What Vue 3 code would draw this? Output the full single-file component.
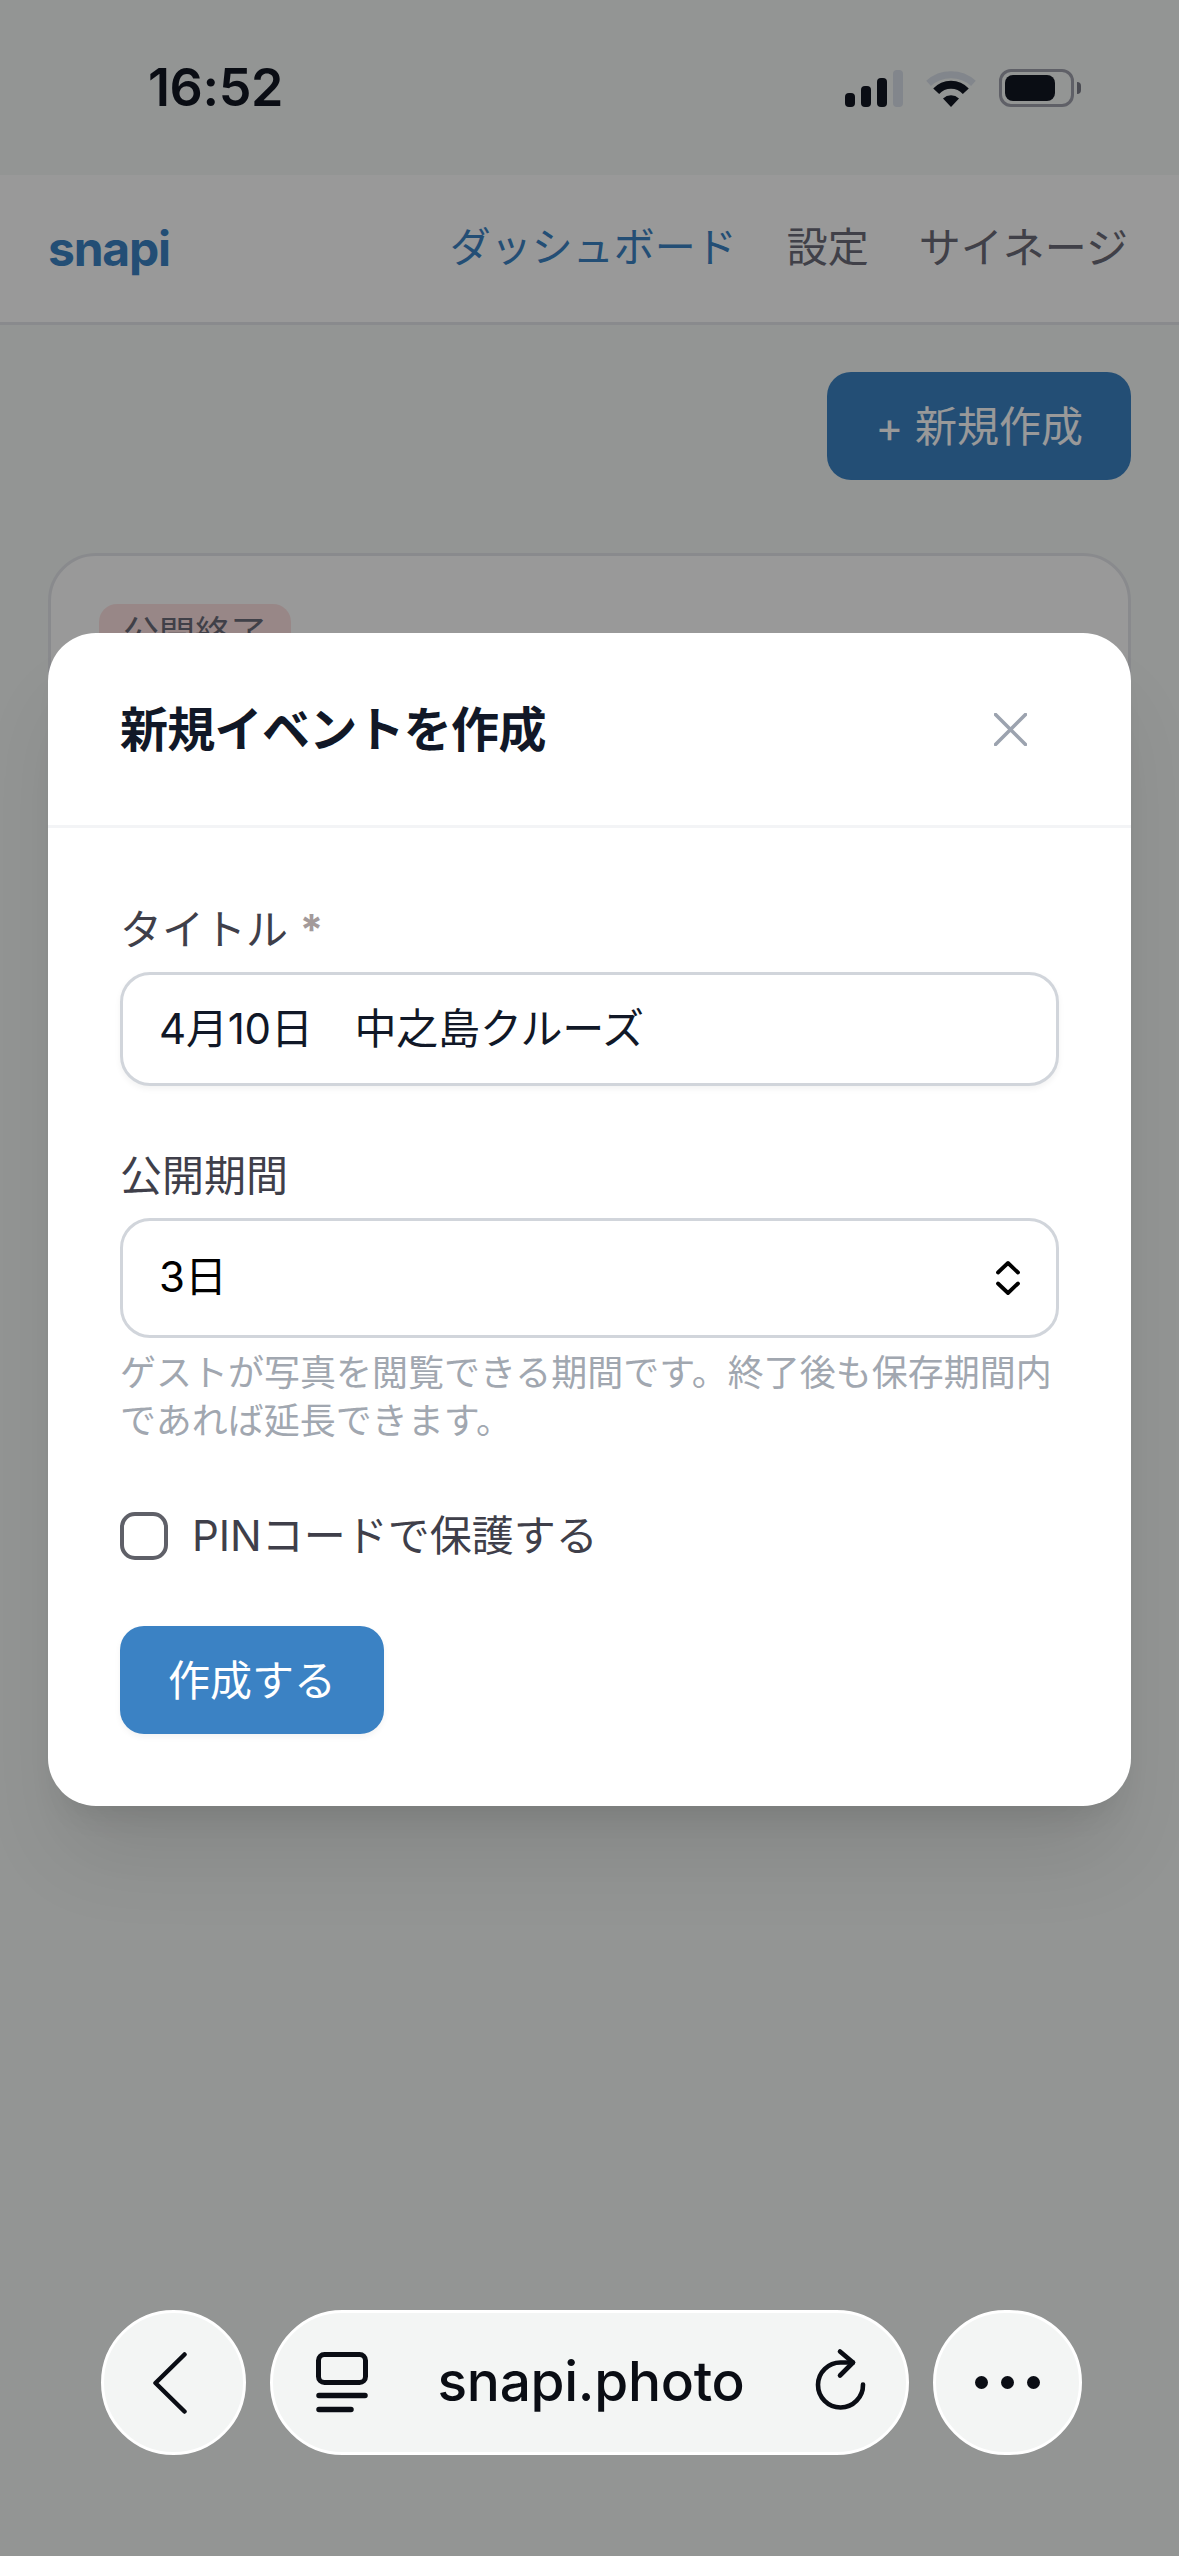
<script setup>
import { ref } from 'vue';

// フォームの初期値
const title = ref('4月10日　中之島クルーズ');
const period = ref('3日');
const usePin = ref(false);
</script>

<template>
  <div class="screen">
    <div class="page">
      <header class="topbar">
        <span class="logo">snapi</span>
        <nav class="nav">
          <a class="active">ダッシュボード</a>
          <a>設定</a>
          <a class="wide">サイネージ</a>
        </nav>
      </header>
      <main class="main">
        <div class="toolbar">
          <button class="btn-new">+ 新規作成</button>
        </div>
        <section class="card">
          <span class="badge">公開終了</span>
        </section>
      </main>
    </div>

    <!-- モーダル -->
    <div class="overlay">
      <div class="modal">
        <div class="modal-head">
          <h2>新規イベントを作成</h2>
          <svg class="close" width="33" height="33" viewBox="0 0 33 33" fill="none" stroke="#9ca3af" stroke-width="3.6" stroke-linecap="round">
            <path d="M1.5 1.5 31.5 31.5M31.5 1.5 1.5 31.5" />
          </svg>
        </div>
        <form class="modal-body" @submit.prevent>
          <div class="field">
            <label>タイトル <span class="req">*</span></label>
            <input v-model="title" class="text-input" type="text" />
          </div>
          <div class="field">
            <label>公開期間</label>
            <div class="select-wrap">
              <select v-model="period" class="select">
                <option>3日</option>
                <option>7日</option>
                <option>30日</option>
              </select>
              <svg class="updown" width="26" height="34" viewBox="0 0 26 34" fill="none" stroke="#000" stroke-width="3.8" stroke-linecap="round" stroke-linejoin="round">
                <path d="M3 11.5 13 2 23 11.5M3 22.5 13 32 23 22.5" />
              </svg>
            </div>
            <p class="help">ゲストが写真を閲覧できる期間です。終了後も保存期間内であれば延長できます。</p>
          </div>
          <label class="check-row">
            <input v-model="usePin" class="check" type="checkbox" />
            <span>PINコードで保護する</span>
          </label>
          <div class="actions">
            <button class="btn-primary">作成する</button>
          </div>
        </form>
      </div>
    </div>

    <!-- ステータスバー -->
    <div class="status">
      <span class="time">16:52</span>
      <div class="status-icons">
        <svg width="58" height="37" viewBox="0 0 58 37">
          <rect x="0" y="23" width="10" height="14" rx="4" fill="#0a0d14" />
          <rect x="16" y="16" width="10" height="21" rx="4" fill="#0a0d14" />
          <rect x="32" y="8" width="10" height="29" rx="4" fill="#0a0d14" />
          <rect x="48" y="0" width="10" height="37" rx="4" fill="#82868c" />
        </svg>
        <svg class="wifi" width="52" height="37" viewBox="0 0 52 37" fill="none">
          <path d="M3.6 13.4A33.5 33.5 0 0 1 48.4 13.4" stroke="#82868c" stroke-width="7" />
          <path d="M11.2 21.2A20 20 0 0 1 40.8 21.2" stroke="#0a0d14" stroke-width="8" />
          <path d="M26 37 18 28.4A12 12 0 0 1 34 28.4Z" fill="#0a0d14" />
        </svg>
        <div class="battery"><i></i></div>
        <span class="nub"></span>
      </div>
    </div>

    <!-- Safari のツールバー -->
    <div class="safari">
      <div class="pill round back">
        <svg width="34" height="62" viewBox="0 0 34 62" fill="none" stroke="#0a0d14" stroke-width="4.5" stroke-linecap="round" stroke-linejoin="round">
          <path d="M31.5 2.500 2.500 31 31.500 59.500" />
        </svg>
      </div>
      <div class="pill address">
        <svg width="52" height="62" viewBox="0 0 52 62" fill="none" stroke="#0a0d14" stroke-linecap="round">
          <rect x="2.500" y="2.500" width="47" height="28" rx="6" stroke-width="5" />
          <path d="M3 43.500H49M3 57.500H35" stroke-width="5.500" />
        </svg>
        <span class="url">snapi.photo</span>
        <svg width="52" height="70" viewBox="0 0 52 70" fill="none" stroke="#0a0d14" stroke-width="4.600" stroke-linecap="round" stroke-linejoin="round">
          <path d="M39 14.500H27A22.500 22.500 0 1 0 49 36.500" />
          <path d="M26 3.500 39 14.500 26 27.500" />
        </svg>
      </div>
      <div class="pill round more">
        <i></i><i></i><i></i>
      </div>
    </div>
  </div>
</template>

<style scoped>
.screen {
  position: relative;
  width: 1179px;
  height: 2556px;
  overflow: hidden;
  background: #f5f9f7;
  font-family: Inter, "Noto Sans CJK JP", sans-serif;
  color: #111827;
}

.page {
  padding-top: 175px;
}

.topbar {
  display: flex;
  align-items: center;
  justify-content: space-between;
  height: 150px;
  padding: 0 51px 0 48px;
  box-sizing: border-box;
  background: #fff;
  border-bottom: 3px solid #e5e7eb;
}

.logo {
  font-size: 48px;
  font-weight: 700;
  letter-spacing: -1.2px;
  color: #3b82c4;
}

.nav {
  display: flex;
  gap: 50px;
  margin-bottom: 8px;
  font-size: 41px;
  color: #6b6b78;
}

.nav .active {
  color: #3b82c4;
}

.nav .wide {
  font-size: 42px;
}

.main {
  padding: 47px 48px 0;
}

.toolbar {
  display: flex;
  justify-content: flex-end;
  margin-bottom: 73px;
}

.btn-new {
  height: 108px;
  padding: 0 48px 6px;
  border: 0;
  border-radius: 24px;
  background: #3b82c4;
  color: #fff;
  font: inherit;
  font-size: 42px;
}

.card {
  height: 800px;
  padding: 48px;
  background: #fff;
  border: 3px solid #e5e7eb;
  border-radius: 48px;
  box-sizing: border-box;
}

.badge {
  display: inline-block;
  padding: 0 24px;
  line-height: 60px;
  border-radius: 18px;
  background: #fee2e2;
  color: #6b6b78;
  font-size: 36px;
}

.overlay {
  position: absolute;
  inset: 0;
  padding: 633px 48px 0;
  box-sizing: border-box;
  background: rgba(0, 0, 0, 0.4);
}

.modal {
  background: #fff;
  border-radius: 48px;
  box-shadow: 0 60px 85px -15px rgba(0, 0, 0, 0.1), 0 24px 30px -18px rgba(0, 0, 0, 0.1);
}

.modal-head {
  display: flex;
  align-items: center;
  justify-content: space-between;
  padding: 60px 104px 60px 72px;
  border-bottom: 3px solid #f3f4f6;
}

.modal-head h2 {
  margin: 0;
  height: 72px;
  padding-top: 1px;
  box-sizing: border-box;
  font-size: 48px;
  line-height: 72px;
  font-weight: 700;
  letter-spacing: -0.7px;
  color: #111827;
}

.modal-body {
  display: flex;
  flex-direction: column;
  gap: 60px;
  padding: 72px;
}

.field label {
  display: block;
  margin-bottom: 12px;
  font-size: 42px;
  line-height: 60px;
  color: #3f3f4a;
}

.req {
  color: #a39a9a;
  font-weight: 700;
}

.text-input,
.select {
  display: block;
  width: 100%;
  box-sizing: border-box;
  background: #fff;
  border: 3px solid #d1d5db;
  border-radius: 30px;
  font: inherit;
  font-size: 42px;
  color: #111827;
  outline: none;
}

.text-input {
  height: 114px;
  padding: 0 36px 8px;
  letter-spacing: -0.2px;
  box-shadow: 0 3px 6px rgba(0, 0, 0, 0.05);
}

.select {
  height: 120px;
  padding: 0 36px 3px;
  appearance: none;
  color: #000;
}

.select-wrap {
  position: relative;
}

.updown {
  position: absolute;
  right: 38px;
  top: 43px;
}

.help {
  margin: 11px 0 1px;
  font-size: 36px;
  line-height: 48px;
  color: #a1a7b0;
}

.check-row {
  display: flex;
  align-items: center;
  gap: 24px;
  font-size: 42px;
  line-height: 60px;
  color: #3f3f4a;
}

.check {
  appearance: none;
  width: 48px;
  height: 48px;
  margin: 0;
  border: 4px solid #5f6068;
  border-radius: 15px;
  background: #fff;
}

.actions {
  display: flex;
}

.btn-primary {
  height: 108px;
  padding: 0 48px 6px;
  border: 0;
  border-radius: 24px;
  background: #3b82c4;
  color: #fff;
  font: inherit;
  font-size: 42px;
  box-shadow: 0 3px 6px rgba(0, 0, 0, 0.05);
}

.status {
  position: absolute;
  top: 0;
  left: 0;
  right: 0;
  height: 175px;
  display: flex;
  justify-content: space-between;
  padding: 60px 98px 0 148px;
  box-sizing: border-box;
}

.time {
  font-size: 52px;
  font-weight: 600;
  line-height: 56px;
  letter-spacing: -0.4px;
  color: #0a0d14;
}

.status-icons {
  display: flex;
  align-items: center;
  height: 56px;
}

.wifi {
  margin-left: 22px;
}

.battery {
  width: 75px;
  height: 38px;
  margin-left: 22px;
  box-sizing: border-box;
  border: 3.500px solid #5f6067;
  border-radius: 12px;
  padding: 3px;
}

.battery i {
  display: block;
  width: 50px;
  height: 100%;
  border-radius: 8px;
  background: #0a0d14;
}

.nub {
  width: 4px;
  height: 12px;
  margin-left: 3px;
  border-radius: 0 6px 6px 0;
  background: #4a4b52;
}

.safari {
  position: absolute;
  left: 101px;
  top: 2310px;
  display: flex;
  gap: 24px;
}

.pill {
  display: flex;
  align-items: center;
  justify-content: center;
  height: 145px;
  box-sizing: border-box;
  background: #f3f5f4;
  border: 3px solid #fff;
  border-radius: 73px;
}

.round {
  width: 145px;
}

.back svg {
  margin-right: 7px;
}

.more {
  width: 149px;
  gap: 13px;
}

.more i {
  width: 13px;
  height: 13px;
  border-radius: 50%;
  background: #0a0d14;
}

.address {
  width: 639px;
  justify-content: space-between;
  padding: 0 40px 0 43px;
}

.url {
  font-size: 55px;
  font-weight: 500;
  letter-spacing: -0.3px;
  line-height: 64px;
  margin-bottom: 4px;
  color: #0a0d14;
}
</style>

<style>
html,
body {
  margin: 0;
  background: #959696;
}
</style>
